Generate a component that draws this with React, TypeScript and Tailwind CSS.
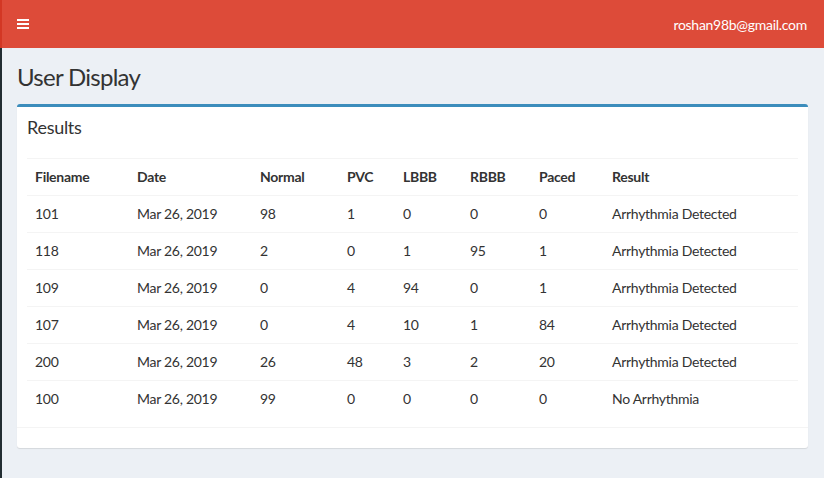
const rows = [
  ["101", "Mar 26, 2019", "98", "1", "0", "0", "0", "Arrhythmia Detected"],
  ["118", "Mar 26, 2019", "2", "0", "1", "95", "1", "Arrhythmia Detected"],
  ["109", "Mar 26, 2019", "0", "4", "94", "0", "1", "Arrhythmia Detected"],
  ["107", "Mar 26, 2019", "0", "4", "10", "1", "84", "Arrhythmia Detected"],
  ["200", "Mar 26, 2019", "26", "48", "3", "2", "20", "Arrhythmia Detected"],
  ["100", "Mar 26, 2019", "99", "0", "0", "0", "0", "No Arrhythmia"],
];

const heads = ["Filename", "Date", "Normal", "PVC", "LBBB", "RBBB", "Paced", "Result"];
const widths = ["w-[102px]", "w-[123px]", "w-[87px]", "w-[56px]", "w-[67px]", "w-[69px]", "w-[73px]", ""];

export default function App() {
  return (
    <div className="min-h-[478px] bg-[#ecf0f5] flex text-[#333] font-['Lato',sans-serif] text-[14px] tracking-[-0.02em]">
      {/* sidebar edge */}
      <div className="w-[2px] flex flex-col shrink-0">
        <div className="h-[48px] bg-[#d33724]" />
        <div className="flex-1 bg-[#222d32]" />
      </div>

      <div className="flex-1 flex flex-col">
        {/* Navbar */}
        <header className="h-[48px] bg-[#dd4b39] flex items-center justify-between pl-[15px] pr-[17px] text-white">
          <button className="flex flex-col gap-[2px] w-[12px]">
            <span className="h-[2px] bg-white" />
            <span className="h-[2px] bg-white" />
            <span className="h-[2px] bg-white" />
          </button>
          <span className="text-[14px]">roshan98b@gmail.com</span>
        </header>

        {/* Content */}
        <div className="pl-[15px] pr-[16px] pt-[16px]">
          <h1 className="text-[24px] leading-[26px] m-0 tracking-[-0.03em]">User Display</h1>
        </div>
        <div className="pl-[15px] pr-[16px] pt-[14px]">
          <div className="bg-white rounded-[3px] border-t-[3px] border-[#3c8dbc] shadow-[0_1px_1px_rgba(0,0,0,0.1)]">
            <div className="px-[10px] py-[10px]">
              <h3 className="text-[18px] leading-[21px] m-0">Results</h3>
            </div>
            <div className="p-[10px]">
              <table className="w-full border-collapse table-fixed">
                <thead>
                  <tr>
                    {heads.map((h, i) => (
                      <th
                        key={h}
                        className={`${widths[i]} text-left font-bold px-[8px] py-[8px] leading-[20px] border-t border-b border-[#f4f4f4]`}
                      >
                        {h}
                      </th>
                    ))}
                  </tr>
                </thead>
                <tbody>
                  {rows.map((r) => (
                    <tr key={r[0]}>
                      {r.map((c, i) => (
                        <td key={i} className="px-[8px] py-[8px] leading-[20px] border-t border-[#f4f4f4]">
                          {c}
                        </td>
                      ))}
                    </tr>
                  ))}
                </tbody>
              </table>
            </div>
            <div className="border-t border-[#f4f4f4] h-[21px]" />
          </div>
        </div>
      </div>
    </div>
  );
}
